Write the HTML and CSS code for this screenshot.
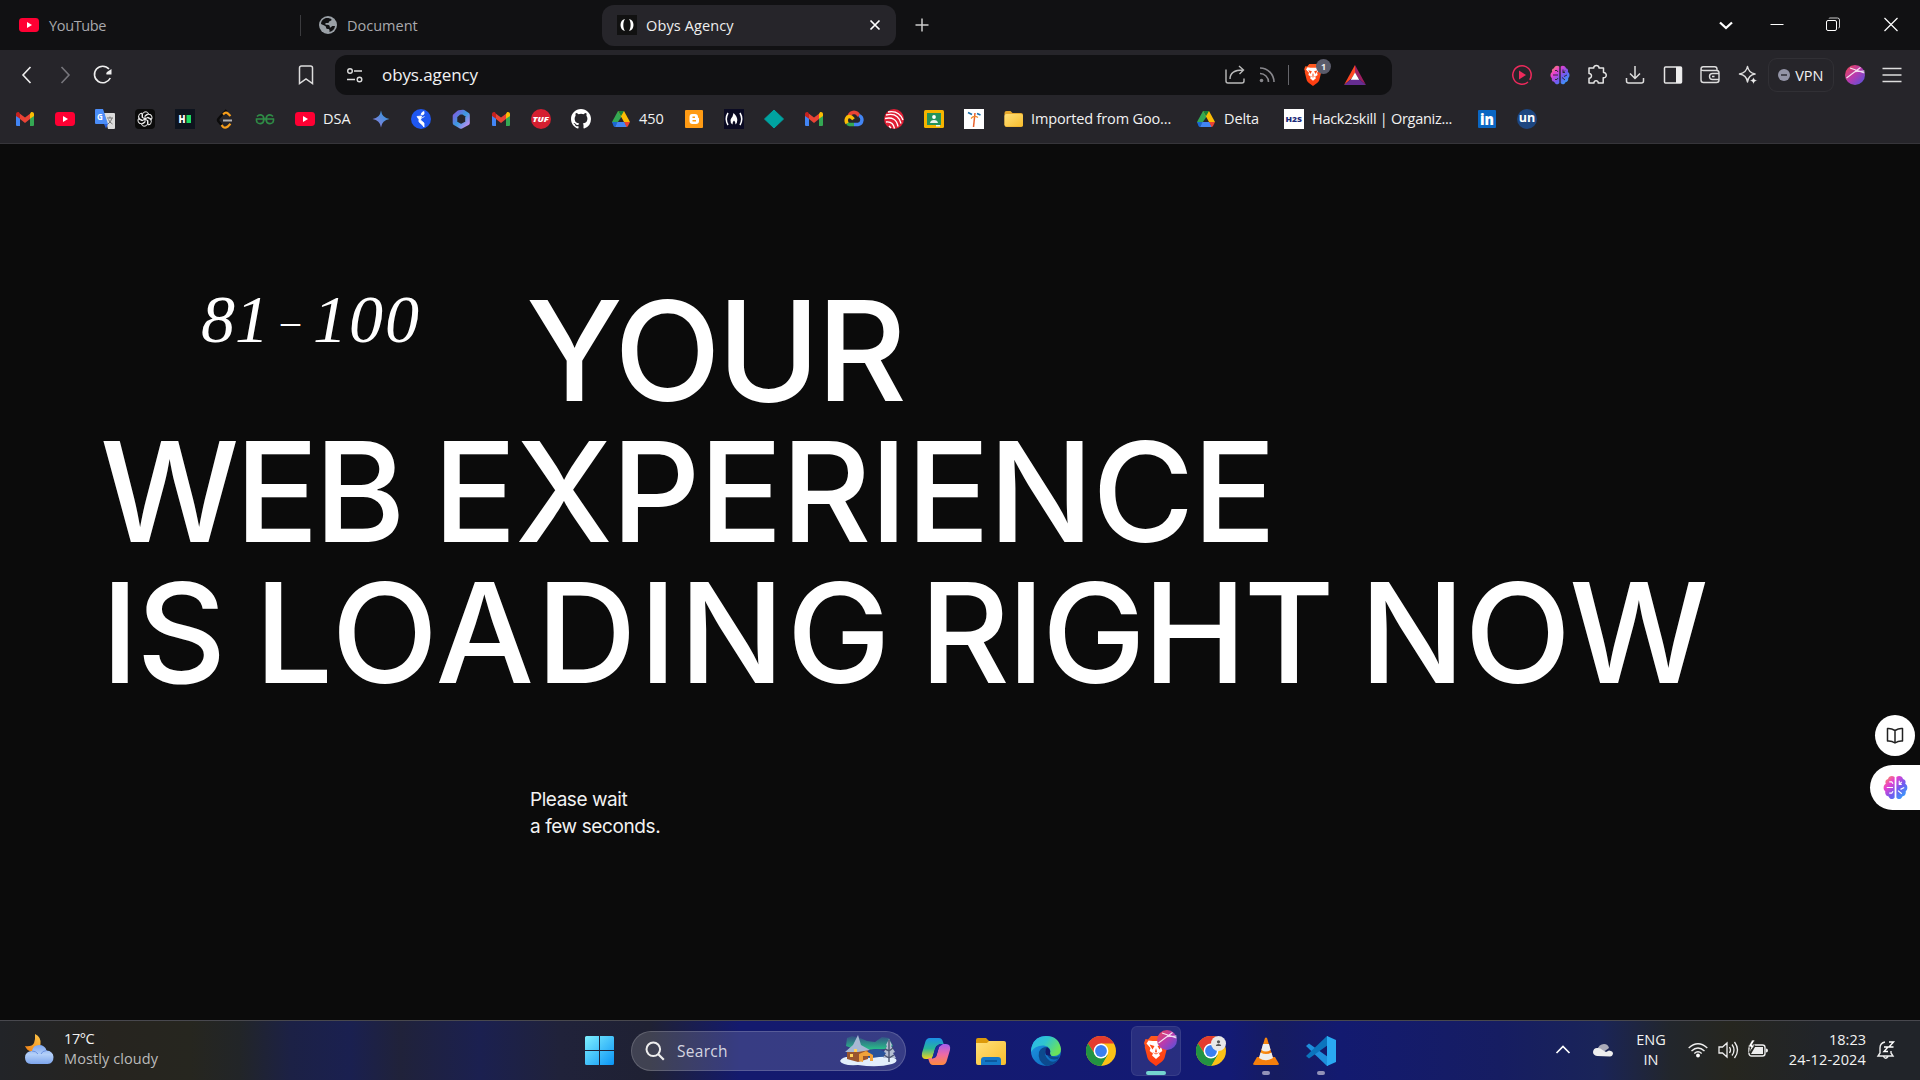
FILE: index.html
```html
<!DOCTYPE html>
<html lang="en">
<head>
<meta charset="utf-8">
<title>Obys Agency</title>
<link rel="stylesheet" href="styles.css">
</head>
<body>
<svg class="sprite" aria-hidden="true">
  <defs>
    <linearGradient id="g-brain" x1="0" y1="0" x2="1" y2="1"><stop offset="0" stop-color="#ffa53a"/><stop offset=".3" stop-color="#e83fd0"/><stop offset=".6" stop-color="#6d5cf0"/><stop offset="1" stop-color="#23b7ff"/></linearGradient>
    <linearGradient id="g-avatar" x1="0" y1="0" x2="1" y2="1"><stop offset="0" stop-color="#f0474f"/><stop offset=".5" stop-color="#b63bb0"/><stop offset="1" stop-color="#4a54e0"/></linearGradient>
    <linearGradient id="g-gem" x1="0" y1="1" x2="1" y2="0"><stop offset="0" stop-color="#a678c8"/><stop offset=".35" stop-color="#6f86dc"/><stop offset="1" stop-color="#1f9be0"/></linearGradient>
    <linearGradient id="g-m365" x1="0" y1="0" x2="1" y2="1"><stop offset="0" stop-color="#7c5fe0"/><stop offset=".5" stop-color="#3a9be0"/><stop offset="1" stop-color="#c58df0"/></linearGradient>
    <linearGradient id="g-win" x1="0" y1="0" x2="1" y2="1"><stop offset="0" stop-color="#7ff0ff"/><stop offset="1" stop-color="#0a94f5"/></linearGradient>
    <linearGradient id="g-folder" x1="0" y1="0" x2="1" y2="1"><stop offset="0" stop-color="#ffe07a"/><stop offset="1" stop-color="#f8bd2c"/></linearGradient>
    <linearGradient id="g-cloud" x1="0" y1="0" x2="0" y2="1"><stop offset="0" stop-color="#7fa7f0"/><stop offset=".5" stop-color="#b3cff8"/><stop offset="1" stop-color="#7da5ec"/></linearGradient>
    <linearGradient id="g-moon" x1="0" y1="1" x2="1" y2="0"><stop offset="0" stop-color="#f07f14"/><stop offset="1" stop-color="#ffc84a"/></linearGradient>
    <linearGradient id="g-cop1" x1="0" y1="0" x2="0" y2="1"><stop offset="0" stop-color="#1c8fe8"/><stop offset=".5" stop-color="#27b69a"/><stop offset="1" stop-color="#f3d21d"/></linearGradient>
    <linearGradient id="g-cop2" x1="0" y1="0" x2="0" y2="1"><stop offset="0" stop-color="#a45df0"/><stop offset=".5" stop-color="#ee6aa5"/><stop offset="1" stop-color="#ff8a3c"/></linearGradient>
    <linearGradient id="g-edge1" x1="0" y1="0" x2="1" y2=".5"><stop offset="0" stop-color="#2bb3ee"/><stop offset=".5" stop-color="#2fc5d0"/><stop offset="1" stop-color="#6be35a"/></linearGradient>
    <linearGradient id="g-edge2" x1="0" y1="0" x2="1" y2="1"><stop offset="0" stop-color="#1f9be8"/><stop offset="1" stop-color="#0b5fb4"/></linearGradient>
    <linearGradient id="g-brave" x1="0" y1="0" x2="0" y2="1"><stop offset="0" stop-color="#ff5a1f"/><stop offset="1" stop-color="#ff3a10"/></linearGradient>
    <linearGradient id="g-cone" x1="0" y1="0" x2="1" y2="0"><stop offset="0" stop-color="#ff9a1c"/><stop offset="1" stop-color="#f07000"/></linearGradient>
    <linearGradient id="g-aurora" x1="0" y1="0" x2="0" y2="1"><stop offset="0" stop-color="#25d98a" stop-opacity=".15"/><stop offset="1" stop-color="#25e88a"/></linearGradient>
  </defs>
  <symbol id="youtube" viewBox="0 0 20 20"><rect y="3" width="20" height="14" rx="3.4" fill="#ff0033"/><path d="M8 7v6l5-3z" fill="#fff"/></symbol>
  <symbol id="gmail" viewBox="0 0 20 20"><path d="M1 6v10q0 1 1 1h3V8z" fill="#4285f4"/><path d="M15 8v9h3q1 0 1-1V6z" fill="#34a853"/><path d="M5 4.800v5L1 7V5c0-1.800 2-2.700 3.200-1.600z" fill="#c5221f"/><path d="M15 4.800v5L19 7V5c0-1.800-2-2.700-3.200-1.600z" fill="#fbbc04"/><path d="M5 4.800v5.300l5 3.800 5-3.800V4.800l-5 3.800z" fill="#ea4335"/></symbol>
  <symbol id="drive" viewBox="0 0 20 20"><path d="M7 2h3l2 3.500L4.500 16.500 1 13z" fill="#34a853"/><path d="M7 2h6l3 5.500 3 5.500h-6z" fill="#fbbc04"/><path d="M7 2h6L10 7.300z" fill="#188038"/><path d="M1 13h5.500L4 18q-1 0-1.500-1z" fill="#1967d2"/><path d="M6.500 13h7l2.500 5H4z" fill="#4285f4"/><path d="M13.200 13H19l-2 4q-.5 1-1.500 1z" fill="#ea4335"/></symbol>
  <symbol id="brain" viewBox="0 0 20 20"><path d="M9.300 1.500C7 0 4.500 1 4 3.200 2 3.500 1.500 5.500 2.200 7 0 8 0 12 1.800 13c-.4 3 1.500 4 2.700 4.200C5.300 19.500 8 20 9.300 18zM10.700 1.500C13 0 15.500 1 16 3.200c2 .3 2.500 2.300 1.800 3.800 2.200 1 2.200 5 .4 6 .4 3-1.500 4-2.700 4.200-.8 2.300-3.500 2.800-4.800.8z" fill="url(#g-brain)"/></symbol>
  <symbol id="brain-lines" viewBox="0 0 20 20"><path d="M5 5.500h2l1 1.500M3 10h5M5 14.500h2l1-1.500M15 5.500l-2 2M13 4.500v3h2M17 10l-3 1.500M12 12.500l3 2.500" fill="none" stroke="currentColor" stroke-width=".9"/></symbol>
  <symbol id="avatar" viewBox="0 0 20 20"><circle cx="10" cy="10" r="10" fill="url(#g-avatar)"/><path d="M1.500 13 15.500 2.500M5 3l14.500 5M9.500 6.800l10-.8" fill="none" stroke="#fff" stroke-width="1.100" stroke-opacity=".85"/></symbol>
  <symbol id="lion" viewBox="0 0 24 30"><path d="M7 0h10l3 3.500 2.500-.5L24 7l-1 3 .3 1-2.800 11q-.6 2-2.500 3.400L12 30l-6-4.600Q4.100 24 3.500 22L.7 11 1 10 0 7l1.500-4L4 3.500z" fill="url(#g-brave)"/><path d="M8.500 5h7l4-.5 2 3-4 4.500.8 3-3.300 2.500 1 2L12 23l-4-3.500 1-2L5.700 15l.8-3-4-4.500 2-3z" fill="#fff"/><path d="m5.500 8.500 5 1.500-2 3.500zM18.500 8.500l-5 1.500 2 3.500zM12 12l-1 3.500 1 1.500 1-1.500zM8 16l4 2.500 4-2.500-4 1.500z" fill="#ff4a18"/></symbol>
  <symbol id="chrome" viewBox="0 0 30 30"><circle cx="15" cy="15" r="15" fill="#fbc116"/><path d="M2 7.500A15 15 0 0 1 28 7.500H15L9 18z" fill="#e33b2e"/><path d="M2 7.500A15 15 0 0 0 15 30l6.500-11.300L15 15l-6 3.500z" fill="#229342"/><path d="M15 30 21.500 18.700H9L2 7.500z" fill="#229342"/><circle cx="15" cy="15" r="7.400" fill="#fff"/><circle cx="15" cy="15" r="5.900" fill="#3a7ff0"/></symbol>
</svg>

<div class="screen">
  <header class="tabs">
    <div class="tab tab-first"><svg class="i20"><use href="#youtube"/></svg><span class="t w-yt">YouTube</span></div>
    <div class="tab tab-second"><svg class="i20" viewBox="0 0 20 20"><circle cx="10" cy="10" r="9" fill="#9aa0a6"/><path d="M9 3c2 0 4 .5 4.500 1.500.4 1-1 1.300-2 1.800-.8.500-.5 1.400-1.300 1.700H7.500v1.800h2c1.800.2 2.500 1 2.300 2.600 1.500.4 1.700-1.200 2.700-1.400 1 0 2 .2 2.500 0-.3 3.300-2.500 5.500-5.500 6v-1.700c0-1-.7-1.300-1.700-1.300C8.300 14 8 13.300 8 12c0-.9-3-2-5-3C3.200 5.500 6 3 9 3z" fill="#111113"/></svg><span class="t w-doc">Document</span></div>
    <div class="tab tab-active"><svg class="i20" viewBox="0 0 20 20"><path d="M0 0h20v20H0z" fill="#111"/><path d="M8 4C2 4.500 2 15.500 8 16c-2.200-3-2.200-9 0-12zM12 4c6 .500 6 11.500 0 12 2.200-3 2.200-9 0-12z" fill="#fff"/></svg><span class="t w-obys">Obys Agency</span><svg class="tab-close" viewBox="0 0 10 10"><path d="m.5.5 9 9M9.500.500l-9 9" stroke="#fff" stroke-width="1.700"/></svg></div>
    <svg class="newtab" viewBox="0 0 14 14"><path d="M7 .5v13M.5 7h13" stroke="#ccc" stroke-width="1.500"/></svg>
    <div class="winbtns">
      <svg class="i20" viewBox="0 0 20 20"><path d="m4 7.500 6 5.500 6-5.500" fill="none" stroke="#fff" stroke-width="2.300"/></svg>
      <svg class="i20" viewBox="0 0 20 20"><path d="M3.500 9.500h13" stroke="#fff"/></svg>
      <svg class="i20" viewBox="0 0 20 20"><rect x="3.500" y="5.500" width="10" height="10" rx="1.500" fill="none" stroke="#fff"/><path d="M6 3.500q0-.5 1-.5h7.500q2 0 2 2V12q0 1-1 1" fill="none" stroke="#ccc"/></svg>
      <svg class="i20" viewBox="0 0 20 20"><path d="m3.500 3 13 13M16.500 3l-13 13" stroke="#fff" stroke-width="1.200"/></svg>
    </div>
  </header>

  <div class="toolbar">
    <div class="nav">
      <svg class="i20" viewBox="0 0 20 20"><path d="m13.500 2-7.500 8 7.500 8" fill="none" stroke="#eee" stroke-width="1.600"/></svg>
      <svg class="i20" viewBox="0 0 20 20"><path d="m6.500 2 7.500 8-7.500 8" fill="none" stroke="#77767c" stroke-width="1.600"/></svg>
      <svg class="i20" viewBox="0 0 20 20"><path d="M16 4A8.300 8.300 0 1 0 17.300 13" fill="none" stroke="#eee" stroke-width="1.600"/><path d="M18.500 4v5.500h-5q-.8-1.500.5-2.500z" fill="#eee"/></svg>
      <svg class="i20 bookmark" viewBox="0 0 20 20"><path d="M3.500 3q0-2 2-2h9q2 0 2 2v15.500L10 14l-6.500 4.500z" fill="none" stroke="#ddd" stroke-width="1.500"/></svg>
    </div>
    <div class="omnibox">
      <svg class="i20" viewBox="0 0 20 20"><g fill="none" stroke="#ddd" stroke-width="1.400"><circle cx="5" cy="6" r="2.300"/><path d="M9 6h8M2 14.500h8"/><circle cx="14.500" cy="14.500" r="2.300"/></g></svg>
      <span class="t url w-url">obys.agency</span>
      <svg class="i20 share" viewBox="0 0 20 20"><g fill="none" stroke="#bbb" stroke-width="1.400"><path d="M1 4.500V16q0 2 2 2h14q2 0 2-2v-2.500"/><path d="M5 14c0-6 4.500-9 13-9M14 1l4.500 4-4 4"/></g></svg>
      <svg class="i20 rss" viewBox="0 0 20 20"><g fill="none" stroke="#88878c" stroke-width="1.600"><path d="M3 8.500A8.500 8.500 0 0 1 11.500 17M3 3a14 14 0 0 1 14 14"/></g><circle cx="4.500" cy="15.500" r="1.800" fill="#88878c"/></svg>
      <i class="vbar"></i>
      <div class="shield"><svg class="shield-icon"><use href="#lion"/></svg><b class="badge">1</b></div>
      <svg class="bat" viewBox="0 0 22 20"><path d="M11 0v8l-4 6-7 6z" fill="#ff4724"/><path d="M11 0l11 20-7-6-4-6z" fill="#9e1f63"/><path d="M0 20l7-6h8l7 6z" fill="#662d91"/><path d="m11 7.500 4.200 7.200H6.800z" fill="#fff"/></svg>
    </div>
    <div class="ext">
      <svg class="i20" viewBox="0 0 20 20"><path d="M16 17A9.200 9.200 0 1 1 19.200 10q0 2.500-1.400 4.800" fill="none" stroke="#ee2a5c" stroke-width="1.500"/><path d="M7 5.500v9L14 10z" fill="#ee2a5c"/></svg>
      <div class="brain20"><svg class="i20"><use href="#brain"/></svg><svg class="i20 over dark"><use href="#brain-lines"/></svg></div>
      <svg class="i20" viewBox="0 0 20 20"><path d="M2 3h4.800c-.3-3.200 5.400-3.200 5.200 0h4.500v4.500c4 .2 3.400 6-.3 5.200V18h-5c.2-3-4.500-3-4.200 0H2v-4.800c3.300.3 3.300-5 0-4.700z" fill="none" stroke="#e5e5e5" stroke-width="1.500" stroke-linejoin="round"/></svg>
      <svg class="i20" viewBox="0 0 20 20"><path d="M10 1v12M5 8.500l5 5 5-5M1.500 13v3q0 2 2 2h13q2 0 2-2v-3" fill="none" stroke="#ddd" stroke-width="1.500"/></svg>
      <svg class="i20" viewBox="0 0 20 20"><rect x="1.500" y="2" width="17" height="16" rx="1" fill="none" stroke="#e5e5e5" stroke-width="1.500"/><path d="M13 2h5.500v16H13z" fill="#eee"/></svg>
      <svg class="i20" viewBox="0 0 20 20"><g fill="none" stroke="#ddd" stroke-width="1.400"><path d="M17 5.500V4q0-2.300-2.300-2.300H3.200Q1 1.700 1 4v11q0 2.500 2.500 2.500h13q2.500 0 2.500-2.500V7.800q0-2.300-2.300-2.300H3.500Q1 5.500 1 4"/><path d="M19 8.500h-6.500a3 3 0 0 0 0 6H19M12 11.500h2.500"/></g></svg>
      <svg class="i20" viewBox="0 0 20 20"><path d="M9.500 1.500q1 6 7.500 7.500-6.500 1-7.500 8-1-7-8-8 7-1.500 8-7.500z" fill="none" stroke="#ddd" stroke-width="1.500" stroke-linejoin="round"/><path d="M15.500 12q.5 3 4 3.500-3.500.5-4 4-.5-3.500-4-4 3.500-.5 4-3.500z" fill="#eee" stroke="#26252a" stroke-width=".6"/></svg>
    </div>
    <div class="vpn"><svg class="i12" viewBox="0 0 12 12"><circle cx="6" cy="6" r="6" fill="#9394a6"/><path d="M3 6h6" stroke="#35343c" stroke-width="1.600"/></svg><span class="t w-vpn">VPN</span></div>
    <svg class="i20 me"><use href="#avatar"/></svg>
    <svg class="i20 burger" viewBox="0 0 20 20"><path d="M.5 3.500h19M.5 10h19M.5 16.500h19" stroke="#ddd" stroke-width="1.600"/></svg>
  </div>

  <nav class="bookmarks">
    <svg class="i20"><use href="#gmail"/></svg>
    <svg class="i20"><use href="#youtube"/></svg>
    <svg class="i20" viewBox="0 0 20 20"><path d="M9 4h10q1 0 1 1v14q0 1-1 1h-6z" fill="#dcdcdc"/><path d="M1 0h7l5 15H1q-1 0-1-1V1q0-1 1-1z" fill="#4b8df8"/><path d="m9 15 4 0-2 4.500z" fill="#2b5fd8"/><text x="2" y="11" font-size="8" font-weight="700" fill="#fff">G</text><path d="M12 9h6M15 7.500V9M17 9q-1 4-4 6M13.500 10.500q1 3 4 4.500" stroke="#777" fill="none"/></svg>
    <svg class="i20" viewBox="0 0 20 20"><rect width="20" height="20" rx="4" fill="#0b0b0b"/><g fill="none" stroke="#eee" stroke-width="1"><path id="petal" d="M7.500 8.500V5q1-2.500 3.500-2.200 2 .3 2.500 1.700L10 6.600v4"/><use href="#petal" transform="rotate(60 10 10)"/><use href="#petal" transform="rotate(120 10 10)"/><use href="#petal" transform="rotate(180 10 10)"/><use href="#petal" transform="rotate(240 10 10)"/><use href="#petal" transform="rotate(300 10 10)"/></g></svg>
    <svg class="i20" viewBox="0 0 20 20"><path d="M0 0h20v20H0z" fill="#0e141e"/><text x="3.500" y="14" font-size="10.500" font-weight="800" textLength="7" lengthAdjust="spacingAndGlyphs" fill="#fff">H</text><path d="M11.500 6H16v8h-4.500z" fill="#1ddb62"/></svg>
    <svg class="i20" viewBox="0 0 20 20"><path d="M11.500 1 4 9q-2 2 0 4l2.500 3" fill="none" stroke="#0b0b0b" stroke-width="2.400"/><path d="m8 5.500 1.500-1.300q1.500-1 3 0L15.500 7M6.500 16l1.500 1.800q2 1.500 4.500 0l3-3" fill="none" stroke="#f89f1b" stroke-width="2.200"/><path d="M8 11.500h9" stroke="#b3b3b3" stroke-width="2"/></svg>
    <svg class="i20" viewBox="0 0 20 20"><g fill="none" stroke="#2f8d46" stroke-width="1.600"><path d="M2 7.500q3-3 6-.5 2 3.500 0 6.500-3 2.300-5.800 0Q1.200 12 1.500 10h17q.3 2-.7 3.500-2.800 2.300-5.800 0-2-3 0-6.500 3-2.500 6 .5"/></g></svg>
    <div class="bm"><svg class="i20"><use href="#youtube"/></svg><span class="t w-dsa">DSA</span></div>
    <svg class="i20" viewBox="0 0 20 20"><path d="M10 1.500q1 7.500 8.500 8.500-7.500 1-8.500 8.500-1-7.500-8.500-8.500 7.500-1 8.500-8.500z" fill="url(#g-gem)"/></svg>
    <svg class="i20" viewBox="0 0 20 20"><circle cx="10" cy="10" r="10" fill="#1f57f0"/><path d="M13 2.500q-2.500.5-3 3 1.500 1 3-.5zM6 7.500l4.500-.5-1 4 3.500 3v4q-2-3-4.500-4.500-1-1-.5-3zM9 10l4.500-2.500" fill="#fff" stroke="#fff" stroke-width=".8"/></svg>
    <svg class="i20" viewBox="0 0 20 20"><path d="M8 3.500 12 3l4.500 3v8L10 17.500 4 14V7z" fill="none" stroke="url(#g-m365)" stroke-width="4.600" stroke-linejoin="round"/></svg>
    <svg class="i20"><use href="#gmail"/></svg>
    <svg class="i20" viewBox="0 0 20 20"><circle cx="10" cy="10" r="10" fill="#d41f30"/><text x="1.500" y="12.600" font-size="7.400" font-weight="800" font-style="italic" textLength="16.500" lengthAdjust="spacingAndGlyphs" fill="#fff">TUF</text></svg>
    <svg class="i20" viewBox="0 0 16 16"><path d="M8 0C3.580 0 0 3.580 0 8c0 3.540 2.290 6.530 5.470 7.590.4.070.55-.17.55-.38 0-.19-.01-.82-.01-1.490-2.010.37-2.530-.49-2.690-.94-.09-.23-.48-.94-.82-1.130-.28-.15-.68-.52-.01-.53.63-.01 1.080.58 1.230.82.72 1.210 1.870.87 2.330.66.070-.52.280-.87.510-1.070-1.780-.2-3.640-.89-3.640-3.950 0-.87.310-1.590.82-2.150-.08-.2-.36-1.020.08-2.120 0 0 .67-.21 2.200.82a7.600 7.600 0 0 1 4 0c1.530-1.040 2.200-.82 2.200-.82.44 1.100.16 1.920.08 2.120.51.560.82 1.270.82 2.150 0 3.070-1.870 3.750-3.650 3.950.29.250.54.730.54 1.480 0 1.070-.01 1.930-.01 2.200 0 .21.150.46.550.38A8 8 0 0 0 16 8c0-4.420-3.580-8-8-8z" fill="#fff"/></svg>
    <div class="bm"><svg class="i20"><use href="#drive"/></svg><span class="t w-450">450</span></div>
    <svg class="i20" viewBox="0 0 20 20"><rect x="1" y="1" width="18" height="18" rx="1" fill="#ff9b14"/><path d="M8 5h3q3 0 3 3 0 1 1 1.300V12q0 3-3 3H8.500Q5.500 15 5.500 12V8q0-3 2.500-3z" fill="#fff"/><path d="M8.500 8.200h2.500M8.500 11.800h3.500" stroke="#ff9b14" stroke-width="1.500"/></svg>
    <svg class="i20" viewBox="0 0 20 20"><path d="M0 0h20v20H0z" fill="#0a0a23"/><path d="M4 4Q.5 10 4 16M16 4q3.500 6 0 12" fill="none" stroke="#fff" stroke-width="1.500"/><path d="M9.500 4q3.800 3.500 3.800 7 0 3-1.800 4.500 0-3-1.500-4-1.500 1-1.500 4-2.300-1.500-2-4.500.5-2 2-3.500z" fill="#fff"/></svg>
    <svg class="i20" viewBox="0 0 20 20"><path d="m10 1 9.500 9-9.500 9-9.500-9z" fill="#00a3a0" stroke="#00a3a0" stroke-linejoin="round"/></svg>
    <svg class="i20"><use href="#gmail"/></svg>
    <svg class="i20" viewBox="0 0 20 20"><g fill="none" stroke-width="3.400"><path d="M5 7q1.500-3.500 5-3.700 3.500.2 5 3.700" stroke="#ea4335"/><path d="M15 6.500q3 1 3 4.500-.5 4-4 4.500h-4" stroke="#4285f4"/><path d="M10 15.500H5.500l-2.500-1" stroke="#34a853"/><path d="M3 14.500q-2-3.500.5-6.500 3-1.500 6 2.200" stroke="#fbbc05"/></g></svg>
    <svg class="i20" viewBox="0 0 20 20"><circle cx="10" cy="10" r="10" fill="#e01f35"/><g fill="none" stroke="#fff" stroke-width="1.400"><path d="M4 3q11-2 15 8M2 6q12-3 15 8.500M1 9.500q11-2.500 13 8M2 13q7-1 8.500 6.500M5 17l2 2"/></g></svg>
    <svg class="i20" viewBox="0 0 20 20"><rect y="1" width="20" height="18" rx="1.500" fill="#f4b400"/><path d="M3 4h14v12H3z" fill="#23935b"/><circle cx="10" cy="8" r="1.900" fill="#fff"/><path d="M6 14q.5-3 4-3t4 3zM12 16h4v1.500h-4z" fill="#e8f3ed"/></svg>
    <svg class="i20" viewBox="0 0 20 20"><path d="M0 0h20v20H0z" fill="#fff"/><path d="M11 4 9.500 18" stroke="#e8602c" stroke-width="1.500"/><path d="M7 9.500q3-3.500 7-1" stroke="#f08a28" stroke-width="1.200" fill="none"/><path d="m4 3.500 4 2M13 4.500l3.500 1.500" stroke="#1a6fa8" stroke-width="1.600"/></svg>
    <div class="bm"><svg class="i20" viewBox="0 0 20 20"><path d="M.5 4q0-2 2-2h4l2 2H17q2 0 2 2v10q0 2-2 2H2.500q-2 0-2-2z" fill="#e8a92c"/><path d="M.5 7q0-2 2-2H17q2 0 2 2v9q0 1.500-2 1.500H2.500q-2 0-2-2z" fill="url(#g-folder)"/></svg><span class="t w-imp">Imported from Goo...</span></div>
    <div class="bm bm-delta"><svg class="i20"><use href="#drive"/></svg><span class="t w-delta">Delta</span></div>
    <div class="bm bm-hack"><svg class="i20" viewBox="0 0 20 20"><path d="M0 0h20v20H0z" fill="#fff"/><text x="1.500" y="12.700" font-size="7.500" font-weight="800" textLength="16.500" lengthAdjust="spacingAndGlyphs" fill="#1c2a78">H2S</text></svg><span class="t w-hack">Hack2skill | Organiz...</span></div>
    <svg class="i20 li" viewBox="0 0 20 20"><rect x="1" y="1" width="18" height="18" rx="1" fill="#0a66c2"/><text x="3" y="15.500" font-size="15" font-weight="800" textLength="14" lengthAdjust="spacingAndGlyphs" fill="#fff">in</text></svg>
    <svg class="i20" viewBox="0 0 20 20"><circle cx="10" cy="10" r="10" fill="#1d4680"/><text x="1.700" y="13.300" font-size="13" font-weight="700" textLength="16.500" lengthAdjust="spacingAndGlyphs" fill="#fff">un</text></svg>
  </nav>

  <main class="page">
    <p class="counter"><span>81</span><i class="dash">–</i><span class="total">100</span></p>
    <h1 class="headline">
      <span class="line"><span class="t w1">YOUR</span></span>
      <span class="line"><span class="t w2">WEB</span><span class="t w3">EXPERIENCE</span></span>
      <span class="line"><span class="t w4">IS</span><span class="t w5">LOADING</span><span class="t w6">RIGHT</span><span class="t w7">NOW</span></span>
    </h1>
    <p class="wait"><span class="t wa">Please wait</span><span class="t wb">a few seconds.</span></p>
    <div class="floaters">
      <div class="reader"><svg class="i20" viewBox="0 0 20 20"><path d="M10 4.500Q6 2 2.500 2.500V15q4-.5 7.500 2 3.500-2.500 7.500-2V2.500Q14 2 10 4.500V17" fill="none" stroke="#222" stroke-width="1.500" stroke-linejoin="round"/></svg></div>
      <div class="brainpill"><svg class="i25"><use href="#brain"/></svg><svg class="i25 over light"><use href="#brain-lines"/></svg></div>
    </div>
  </main>

  <footer class="taskbar">
    <div class="weather">
      <svg class="weather-icon" viewBox="0 0 30 30"><path d="M11 0q6.500 3 5.500 10.500Q15 18 8 17.500 3 17 1 12q7 1 9-3 1.500-4 1-9z" fill="url(#g-moon)"/><path d="M7 30q-6-.5-6-6.500Q1.500 17 8 17q1-6 7-6t7.500 5.500Q29 17 29.500 23q0 6.500-6 7z" fill="url(#g-cloud)"/><path d="M8 17q4 0 6 3M22.500 16.500Q18 17 17 20" fill="none" stroke="#6d93e2" stroke-width="1"/></svg>
      <div class="lines"><span class="t w-temp">17°C</span><span class="t w-cl dim">Mostly cloudy</span></div>
    </div>
    <div class="apps">
      <svg class="win" viewBox="0 0 29 29"><path d="M1.500 0H14v14H0V1.500Q0 0 1.500 0zM15 0h12.500Q29 0 29 1.500V14H15zM0 15h14v14H1.500Q0 29 0 27.500zM15 15h14v12.500q0 1.500-1.500 1.500H15z" fill="url(#g-win)"/></svg>
      <div class="search">
        <svg class="i20" viewBox="0 0 20 20"><circle cx="8.300" cy="8.300" r="6.800" fill="none" stroke="#eee" stroke-width="2"/><path d="m13.300 13.300 5.500 5.500" stroke="#eee" stroke-width="2.200"/></svg>
        <span class="t w-search">Search</span>
        <svg class="scene" viewBox="0 0 57 31"><path d="M6 11 7 3l5-2 8 2 7 3 8 1 7-5 7 1 4 8-6 3-30 1z" fill="url(#g-aurora)" opacity=".8"/><path d="M27 18q8-8 19 0v5H27z" fill="#28539a"/><path d="M0 26q3-5 12-4l20 1q18-3 24 1 2 3-4 5-14 4-34 1-16 1-18-4z" fill="#e3effb"/><path d="M7 15h21v9l-10 3-11-3z" fill="#9a552d"/><path d="m5 17 8-7 5-10 3 10 9 5-12 2z" fill="#a7b8d4"/><path d="M19 19l7-3 7 4v6h-3v-5h-7v6l-4-1z" fill="#f0a23a"/><path d="M10 19h3v3h-3zM14 14h3v3h-3z" fill="#ffd35c"/><path d="M49 4l3 6-1 1 4 6-2 1 3 5H43l3-5-2-1 3-6-1-1z" fill="#b5bfd2"/><path d="M49 5v22M45 14l4 2 4-3M44 20l5 3 5-3" stroke="#4b5570" stroke-width="1.400" fill="none"/></svg>
      </div>
      <svg class="i30" viewBox="0 0 30 30"><path d="M9 2h9q3 0 4 4l1 3h-5q-3 0-4 4l-2 7q-1 3-4 3H5Q0 23 1 17l3-10Q5 2 9 2z" fill="url(#g-cop1)"/><path d="M21 29h-9q-3 0-4-4l-1-3h5q3 0 4-4l2-7q1-3 4-3h3q5 0 4 6l-3 10q-1 5-5 5z" fill="url(#g-cop2)"/><path d="m14 13 4-5h4l-4 3-3 10-4 2z" fill="#1b2c9c"/></svg>
      <svg class="i30" viewBox="0 0 30 30"><path d="M0 4q0-2 2-2h8l3 3v5H0z" fill="#dd9a0a"/><path d="M0 9V7h11l2-2h15q2 0 2 2v20q0 2-2 2H2q-2 0-2-2z" fill="url(#g-folder)"/><path d="M5 29v-5q0-3 3-3h14q3 0 3 3v5z" fill="#1377c8"/><path d="M9 25h12" stroke="#0a4a88" stroke-width="1.300"/></svg>
      <svg class="i30" viewBox="0 0 30 30"><circle cx="15" cy="15" r="15" fill="url(#g-edge2)"/><path d="M1 10Q4 0 15 0q13 0 15 13 0 7-7 7-4 0-4-2 2-7-6-8.500Q4 9 0 16q0-3 1-6z" fill="url(#g-edge1)"/><path d="M19 18q0 3 6 3 3 0 4-2-4 11-14 11Q6 25 8 16q2-5 8-5-5 8 3 14 5 2 8-2-10 2-11-5.500z" fill="#0c4a8e"/><path d="M16 11q-3 4-1 8l5 1q-1-2-1-3 1-4-3-6z" fill="#121b6c"/></svg>
      <svg class="i30"><use href="#chrome"/></svg>
      <div class="app active"><svg class="lion30"><use href="#lion"/></svg><svg class="i20 sticker"><use href="#avatar"/></svg><i class="run wide"></i></div>
      <div class="app"><svg class="i30"><use href="#chrome"/></svg><svg class="profile" viewBox="0 0 15 15"><circle cx="7.500" cy="7.500" r="7.500" fill="#e8e8e8"/><circle cx="7.500" cy="5.800" r="1.600" fill="#555"/><path d="M4.800 10q0-2 2.700-2t2.700 2z" fill="#555"/></svg></div>
      <div class="app"><svg class="i30" viewBox="0 0 30 30"><path d="M6 21h18l4 7q0 1-2 1H4q-2 0-2-1z" fill="#f57f0c"/><path d="M14 2q1-1 2 0l6 20q-7 5-14 0z" fill="url(#g-cone)"/><path d="m12 8 6 0 1.600 6q-4.600 3-9.200 0zM9.500 16.500q5.500 3 11 0L22 22q-7 4.500-14 0z" fill="#eee"/></svg><i class="run"></i></div>
      <div class="app"><svg class="i30" viewBox="0 0 30 30"><path d="m0 10 3-2.500L22 21v9l-1 0z" fill="#1f8fdc"/><path d="m0 20 3 2.500L22 9V0l-1 0z" fill="#0b74bd"/><path d="M21 0 30 4v22l-9 4z" fill="#2aa9f2"/></svg><i class="run"></i></div>
    </div>
    <div class="tray">
      <svg class="i20 up" viewBox="0 0 20 20"><path d="m3.500 13 6.500-6.500 6.500 6.500" fill="none" stroke="#fff" stroke-width="1.700"/></svg>
      <svg class="i20 cloud" viewBox="0 0 20 20"><path d="M4 10q2-6 7-6 4 0 5 4l-7 5z" fill="#aaaab8"/><path d="M4 16q-4-1-4-4 .5-4 4-4 3-.500 5.500 2L13 12l3-1.500q4 .5 4 3-.5 3-3 3z" fill="#eee"/></svg>
      <div class="lines lang"><span class="t w-eng">ENG</span><span>IN</span></div>
      <svg class="i20 wifi" viewBox="0 0 20 20"><g fill="none" stroke="#eee" stroke-width="1.400"><path d="M.7 8q9.300-8.500 18.600 0M3.500 11q6.500-6 13 0M6.300 13.500q3.700-3.300 7.400 0"/></g><circle cx="10" cy="15.500" r="1.900" fill="#fff"/></svg>
      <svg class="i20 vol" viewBox="0 0 20 20"><g fill="none" stroke="#eee" stroke-width="1.300"><path d="M1 7h3.500L9 3v14l-4.500-4H1zM11.500 7q2 3 0 6M14 4.500q4 5.500 0 11M16.500 2q6 8 0 16"/></g></svg>
      <svg class="i20 batt" viewBox="0 0 20 20"><rect x="1" y="5" width="16" height="11" rx="2.500" fill="none" stroke="#eee" stroke-width="1.400"/><path d="M18 8.500q2 0 2 2t-2 2z" fill="#eee"/><path d="M7 7h8v7H3z" fill="#eee"/><path d="m4 0-4 7h3l-2 6 6-8H4l3-5z" fill="#fff" stroke="#25261f" stroke-width=".7"/></svg>
      <div class="lines clock"><span class="t w-time">18:23</span><span class="t w-date">24-12-2024</span></div>
      <svg class="i20 bell" viewBox="0 0 20 20"><path d="M9 2Q4 3 4 8v5l-2 3h15l-2-3V11M7.500 16.500q2 3.500 4.500 0" fill="none" stroke="#eee" stroke-width="1.400"/><path d="M8 7h4l-4 4.500h4M13 2h4.500L13 7h4.500" fill="none" stroke="#fff" stroke-width="1.400"/></svg>
    </div>
  </footer>
</div>
</body>
</html>
```
FILE: styles.css
```css
* { box-sizing: border-box; }
body { margin: 0; background: #0b0b0b; font-family: "Open Sans", "Noto Sans", sans-serif; font-size: 14.5px; color: #f2f2f2; }
svg { display: block; flex: none; overflow: visible; }
.sprite { position: absolute; width: 0; height: 0; }
.screen { width: 1920px; height: 1080px; overflow: hidden; display: flex; flex-direction: column; }
.t { white-space: nowrap; display: block; }
.i12 { width: 12px; height: 12px; }
.i20 { width: 20px; height: 20px; }
.i25 { width: 25px; height: 25px; }
.i30 { width: 30px; height: 30px; }
.over { position: absolute; }
.dark { color: #26252a; }
.light { color: #fff; }

/* Tab strip */
.tabs { height: 50px; background: #111113; display: flex; align-items: center; flex: none; }
.tab { display: flex; align-items: center; gap: 10px; color: #a9a9ad; height: 41px; }
.tab-first { width: 301px; height: 21px; padding-left: 19px; border-right: 1px solid #3b3b3e; }
.tab-second { width: 301px; padding-left: 17px; gap: 9px; }
.tab-active { width: 294px; padding-left: 15px; padding-right: 16px; gap: 9px; background: #26252a; border-radius: 12px; color: #eee; }
.w-yt { letter-spacing: -.35px; }
.w-obys { letter-spacing: .12px; }
.tab-close { width: 10px; height: 10px; margin-left: auto; }
.newtab { width: 14px; height: 14px; margin-left: 19px; }
.winbtns { display: flex; margin-left: auto; padding-right: 19px; }
.winbtns svg { margin-left: 37px; }
.winbtns svg:nth-child(2) { margin-left: 31px; }
.winbtns svg:nth-child(3) { margin-left: 36px; }
.winbtns svg:nth-child(4) { margin-left: 38px; }

/* Navigation toolbar */
.toolbar { height: 50px; background: #26252a; display: flex; align-items: center; flex: none; }
.nav { width: 335px; display: flex; gap: 18px; padding-left: 17px; }
.bookmark { margin-left: 165px; }
.omnibox { width: 1057px; height: 40px; border-radius: 12px; background: #111113; display: flex; align-items: center; padding-left: 10px; }
.url { font-size: 17px; line-height: 22px; padding-bottom: 1px; margin-left: 17px; width: 843px; letter-spacing: -.1px; }
.rss { margin-left: 12px; }
.vbar { width: 1px; height: 20px; margin-left: 11px; background: #66666b; }
.shield { position: relative; margin-left: 14px; width: 20px; height: 22px; }
.shield-icon { width: 20px; height: 22px; }
.badge { position: absolute; left: 13px; top: -5px; width: 15px; height: 15px; border-radius: 8px; background: #5b5c6b; font-size: 9px; line-height: 15px; text-align: center; color: #eee; }
.bat { width: 22px; height: 20px; margin-left: 21px; }
.ext { display: flex; gap: 17.700px; margin-left: 120px; }
.brain20 { display: flex; position: relative; }
.vpn { width: 66px; height: 34px; margin-left: 10px; border: 1px solid #313035; border-radius: 9px; display: flex; align-items: center; gap: 5px; padding-left: 9px; }
.me { margin-left: 11px; }
.burger { margin-left: 17px; }

/* Bookmarks bar */
.bookmarks { height: 44px; background: #26252a; border-bottom: 1px solid #36353a; display: flex; align-items: center; gap: 20px; padding: 0 0 5px 15px; flex: none; }
.bm { display: flex; align-items: center; gap: 8px; height: 20px; }
.bm .t { line-height: 20px; padding-bottom: 1px; }
.w-dsa { width: 28px; }
.w-450 { width: 25px; }
.w-imp { width: 140px; margin-left: -1px; letter-spacing: -.15px; }
.w-delta { width: 35px; letter-spacing: -.1px; }
.w-hack { width: 140px; letter-spacing: -.28px; }
.bm-delta, .bm-hack, .li { margin-left: 5px; }

/* Page content */
.page { flex: 1; position: relative; padding: 136px 0 0; background: #0b0b0b; }
.counter { position: absolute; left: 201px; top: 137px; margin: 0; display: flex; font: italic 68px/76px "Liberation Serif", serif; color: #fff; }
.dash { font-size: 38px; line-height: 80px; margin: 0 13px 0 12px; }
.total { letter-spacing: 2px; }
.headline { margin: 0; color: #fff; font: 500 139px/141px Inter, sans-serif; }
.line { display: flex; height: 141px; }
.w1 { margin-left: 526px; letter-spacing: -3.500px; }
.w2 { margin-left: 100px; letter-spacing: -4.500px; }
.w3 { margin-left: 32px; letter-spacing: -1.500px; }
.w4 { margin-left: 101px; letter-spacing: -2.300px; }
.w5 { margin-left: 30.400px; letter-spacing: 2.400px; }
.w6 { margin-left: 26.500px; letter-spacing: -2.800px; }
.w7 { margin-left: 28px; letter-spacing: -.5px; }
.wait { margin: 83px 0 0 530px; font: 400 19px/27px Inter, sans-serif; }
.wa { letter-spacing: -.45px; }
.wb { letter-spacing: -.4px; }
.floaters { position: absolute; right: 0; top: 571px; width: 50px; }
.reader { width: 40px; height: 41px; margin-left: 5px; border-radius: 50%; background: #fff; display: flex; align-items: center; justify-content: center; }
.brainpill { width: 50px; height: 45px; margin-top: 9px; padding-left: 13px; border-radius: 23px 0 0 23px; background: #fff; display: flex; align-items: center; }

/* Taskbar */
.taskbar { position: relative; height: 60px; flex: none; border-top: 1px solid #48484e; display: flex; align-items: center; background: linear-gradient(90deg, #222428 0, #26241f 110px, #26261f 190px, #222528 240px, #1c2145 290px, #1a2050 350px, #20223a 400px, #1b2050 480px, #20223a 560px, #1f2133 650px, #141a6e 740px, #131a74 1230px, #161c60 1275px, #131a70 1340px, #161d62 1500px, #1a2458 1600px, #22262c 1670px, #26261f 1730px, #212429 1820px); }
.weather { display: flex; align-items: center; gap: 10px; width: 585px; padding-left: 24px; padding-bottom: 3px; }
.weather-icon { width: 30px; height: 30px; }
.lines { display: flex; flex-direction: column; line-height: 20px; }
.w-temp { letter-spacing: -.4px; }
.w-cl { letter-spacing: .1px; }
.dim { color: #bbb; }
.apps { display: flex; align-items: center; gap: 25px; }
.win { width: 29px; height: 29px; }
.search { width: 275px; height: 40px; margin-left: -8px; margin-right: -10px; padding: 0 8px 0 13px; border-radius: 20px; border: 1px solid rgba(255,255,255,.17); background: rgba(255,255,255,.15); display: flex; align-items: center; color: #d5d5e0; font-size: 15.500px; }
.w-search { margin-left: 12px; letter-spacing: .3px; }
.scene { width: 57px; height: 31px; margin-left: auto; }
.app { position: relative; width: 50px; height: 50px; margin: 0 -10px; border-radius: 6px; display: flex; align-items: center; justify-content: center; }
.app.active { background: rgba(255,255,255,.09); border: 1px solid rgba(255,255,255,.07); }
.lion30 { width: 24px; height: 30px; }
.sticker { position: absolute; left: 25px; top: 3px; }
.profile { position: absolute; left: 25px; top: 10px; width: 15px; height: 15px; }
.run { position: absolute; left: 21px; bottom: 1px; width: 8px; height: 4px; border-radius: 2px; background: #9292b8; }
.wide { left: 14px; bottom: 0; width: 20px; background: #74d4d0; }
.tray { position: absolute; right: 24px; top: 0; height: 57px; display: flex; align-items: center; }
.cloud { margin-left: 20px; }
.lang { width: 40px; margin-left: 18px; align-items: center; }
.wifi { margin-left: 17px; }
.vol, .batt { margin-left: 10px; }
.clock { margin-left: 10px; width: 88px; align-items: flex-end; }
.w-date { letter-spacing: .15px; }
.bell { margin-left: 10px; }
```
